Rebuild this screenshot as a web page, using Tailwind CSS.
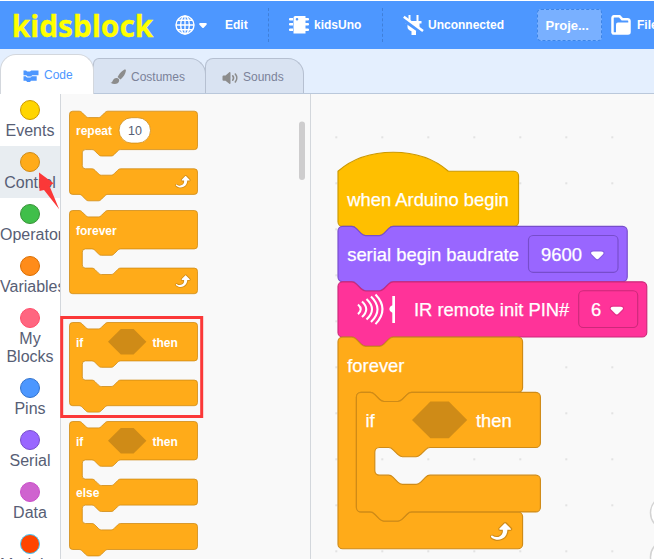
<!DOCTYPE html>
<html lang="en">
<head>
<meta charset="utf-8">
<title>kidsblock</title>
<script src="https://cdn.jsdelivr.net/npm/@tailwindcss/browser@4"></script>
</head>
<body class="w-[654px] h-[559px] overflow-hidden bg-white font-['Liberation_Sans',Arial,sans-serif]">
<div class="relative w-[654px] h-[559px] overflow-hidden flex flex-col pt-px">

  <!-- menu bar -->
  <header class="h-12 shrink-0 bg-[#4d97ff] flex items-center text-white text-xs font-bold overflow-hidden whitespace-nowrap">
    <svg class="w-[168px] h-12 shrink-0" viewBox="0 0 168 48"><text x="11.800" y="36" font-family="Noto Sans, sans-serif" font-weight="700" font-size="29.500" fill="#ffff00" stroke="#ffff00" stroke-width=".3" textLength="141.500" lengthAdjust="spacingAndGlyphs">kidsblock</text></svg>
    <svg class="w-[57px] h-12 shrink-0" viewBox="168 0 57 48" fill="none" stroke="#fff" stroke-width="1.4"><circle cx="185" cy="24" r="9"/><ellipse cx="185" cy="24" rx="4.3" ry="9"/><path d="M185 15v18M176 24h18M177.6 19.2h14.8M177.6 28.8h14.8"/><path d="M200.2 23h5.6L203 26z" fill="#fff" stroke-width="2" stroke-linejoin="round"/></svg>
    <span class="w-[43px] shrink-0 -mt-px">Edit</span>
    <div class="h-[34px] w-px shrink-0 border-l border-dashed border-[#3f7fd9]"></div>
    <svg class="w-[20px] h-[20px] ml-[20px] shrink-0" viewBox="0 0 20 20" fill="#fff"><path fill-rule="evenodd" d="M6.200 1h10.300v17.500H4.500V2.700a1.700 1.700 0 0 1 1.700-1.700zM8 3a1.300 1.300 0 1 0 0 2.600A1.300 1.300 0 0 0 8 3z"/><path d="M1 3h3v2.500H1a1 1 0 0 1 0-2.500zM1 8h3v2.500H1A1 1 0 0 1 1 8zM1 13.500h3V16H1a1 1 0 0 1 0-2.500zM16 3h3a1 1 0 0 1 0 2.500h-3zM16 8h3a1 1 0 0 1 0 2.500h-3zM16 13.500h3a1 1 0 0 1 0 2.500h-3z"/></svg>
    <span class="w-[68px] shrink-0 ml-[5px] -mt-px">kidsUno</span>
    <div class="h-[34px] w-px shrink-0 border-l border-dashed border-[#3f7fd9]"></div>
    <svg class="w-[21px] h-[22px] ml-[20px] shrink-0" viewBox="0 0 21 22" fill="#fff"><path d="M5.500 1h2v6h6V1h2v6h3v2.500h-2V13c0 2.500-2 4-3.500 4.300V21H8.500v-3.700C6 16.500 4.500 15 4.500 13V9.500h-2V7h3z"/><path d="M-1 4.200 20.500 19.200" stroke="#4d97ff" stroke-width="4.500"/><path d="M.8 2.800 20 17" stroke="#fff" stroke-width="2.500"/></svg>
    <span class="w-[109px] shrink-0 ml-[4px] -mt-px">Unconnected</span>
    <div class="w-[65px] h-8 shrink-0 rounded border border-dashed border-[#3d85e8] bg-[#79b0ff] flex items-center pl-[7.500px] pt-px text-[13px]">Proje...</div>
    <svg class="w-[20px] h-[20px] ml-[9px] shrink-0" viewBox="0 0 20 20"><path d="M1.500 17.500V3a1.800 1.800 0 0 1 1.800-1.800h5.200l2.700 3h5.500A1.800 1.800 0 0 1 18.500 6v11a1.500 1.500 0 0 1-1.500 1.500H3a1.500 1.500 0 0 1-1.500-1z" fill="#4d97ff" stroke="#fff" stroke-width="2.500"/><path d="M5 18V9.500A2 2 0 0 1 7 7.500h12V18a1 1 0 0 1-1 1H5z" fill="#fff"/></svg>
    <span class="ml-[6px] shrink-0 -mt-px">File</span>
  </header>

  <!-- tabs -->
  <nav class="h-[45px] shrink-0 bg-[#e4effe] border-b border-[#bac8db] flex items-end text-xs text-[#7b8299]">
    <div class="relative z-10 -mb-px w-[94px] h-[40px] rounded-t-[16px] bg-white border border-b-0 border-[#d3d7dd] flex items-center text-[#4d97ff]">
      <svg class="w-4 h-3 ml-[22px] mt-[3px]" viewBox="0 0 16 12" fill="#4d97ff"><path d="M.5 .5h2.500l1.200 1H7l1.200-1h7.300v4.800H9.200L8 6.500H4.500L3.300 5.300H.5z"/><path d="M.5 6.300h2.200l1.300 1.200h3.500l1.200-1.200h5v4.500H8L7 12H4.200L3 10.800H.5z"/></svg>
      <span class="ml-[5px] mt-[1px]">Code</span>
    </div>
    <div class="-ml-px w-[113px] h-[35px] rounded-t-[16px] rounded-tl-[6px] bg-[#d9e3f2] border border-b-0 border-[#b6c0d1] flex items-center">
      <svg class="w-4 h-4 ml-[16px] mt-[2px]" viewBox="0 0 16 16" fill="#8c8c8c"><path d="M15.500.600c.8.600.3 2.200-.4 3.800-1 2.200-2.700 4.600-4.700 6.100L7.600 8c1-2.200 2.800-4.500 4.700-6.100C13.600.800 14.900.100 15.500.600z"/><path d="M6.800 8.900c1.700.2 2.700 1.400 2.300 3-.5 2.700-4.300 4.200-8.600 1.800 1.300 0 1.700-.8 2.200-2 .7-1.800 2.200-3 4.100-2.800z"/></svg>
      <span class="ml-[5px] mt-px">Costumes</span>
    </div>
    <div class="-ml-px w-[99px] h-[35px] rounded-t-[16px] rounded-tl-[8px] bg-[#d9e3f2] border border-b-0 border-[#b6c0d1] flex items-center">
      <svg class="w-4 h-4 ml-[16px] mt-[3px]" viewBox="0 0 16 16" fill="#8c8c8c"><path d="M.5 6.500A1 1 0 0 1 1.500 5.500h2L7.300 2.200c.6-.4 1.200 0 1.200.6v10.400c0 .7-.6 1-1.200.6L3.500 10.800h-2a1 1 0 0 1-1-1z"/><path d="M10.700 5.800c1 1.300 1 3.100 0 4.400M13.300 4c1.900 2.300 1.900 5.700 0 8" fill="none" stroke="#8c8c8c" stroke-width="1.600" stroke-linecap="round"/></svg>
      <span class="ml-[5px] mt-px">Sounds</span>
    </div>
  </nav>

  <main class="flex flex-1 min-h-0">
    <!-- block categories -->
    <aside class="w-[61px] shrink-0 border-r border-[#d3d7dc] bg-white overflow-hidden flex flex-col text-base leading-[18px] text-[#575e75] text-center">
      <div class="h-[52px] shrink-0 flex flex-col items-center pt-1.5"><i class="size-5 rounded-full bg-[#ffd500] border border-[#cc9900]"></i><span class="mt-[2px]">Events</span></div>
      <div class="h-[52px] shrink-0 flex flex-col items-center pt-1.5 bg-[#e8edf1]"><i class="size-5 rounded-full bg-[#ffab19] border border-[#cf8b17]"></i><span class="mt-[2px]">Control</span></div>
      <div class="h-[52px] shrink-0 flex flex-col items-center pt-1.5"><i class="size-5 rounded-full bg-[#40bf4a] border border-[#389438]"></i><span class="mt-[2px] self-start">Operators</span></div>
      <div class="h-[52px] shrink-0 flex flex-col items-center pt-1.5"><i class="size-5 rounded-full bg-[#ff8c1a] border border-[#db6e00]"></i><span class="mt-[2px] self-start">Variables</span></div>
      <div class="h-[70px] shrink-0 flex flex-col items-center pt-1.5"><i class="size-5 rounded-full bg-[#ff6680] border border-[#ff4d6a]"></i><span class="mt-[2px]">My<br>Blocks</span></div>
      <div class="h-[52px] shrink-0 flex flex-col items-center pt-1.5"><i class="size-5 rounded-full bg-[#4c97ff] border border-[#3373cc]"></i><span class="mt-[2px]">Pins</span></div>
      <div class="h-[52px] shrink-0 flex flex-col items-center pt-1.5"><i class="size-5 rounded-full bg-[#9966ff] border border-[#774dcb]"></i><span class="mt-[2px]">Serial</span></div>
      <div class="h-[52px] shrink-0 flex flex-col items-center pt-1.5"><i class="size-5 rounded-full bg-[#cf63cf] border border-[#c94fc9]"></i><span class="mt-[2px]">Data</span></div>
      <div class="h-[52px] shrink-0 flex flex-col items-center pt-1.5"><i class="size-5 rounded-full bg-[#ff4500] border border-[#42ccff]"></i><span class="mt-[2px] self-start">Modules</span></div>
    </aside>

    <!-- block palette -->
    <section class="w-[250px] shrink-0 bg-[#f9f9f9] border-r border-[#d3d7dc]">
      <svg class="block w-[249px] h-[465px]" viewBox="61 94 249 465">
        <defs>
          <path id="cblock" d="M0 4a4 4 0 0 1 4-4H12c2 0 3 1 4 2l4 4c1 1 2 2 4 2h12c2 0 3-1 4-2l4-4c1-1 2-2 4-2H156a4 4 0 0 1 4 4v40a4 4 0 0 1-4 4H64c-2 0-3 1-4 2l-4 4c-1 1-2 2-4 2h-12c-2 0-3-1-4-2l-4-4c-1-1-2-2-4-2h-8a4 4 0 0 0-4 4v16a4 4 0 0 0 4 4h8c2 0 3 1 4 2l4 4c1 1 2 2 4 2h12c2 0 3-1 4-2l4-4c1-1 2-2 4-2H156a4 4 0 0 1 4 4v24a4 4 0 0 1-4 4H48c-2 0-3 1-4 2l-4 4c-1 1-2 2-4 2h-12c-2 0-3-1-4-2l-4-4c-1-1-2-2-4-2H4a4 4 0 0 1-4-4z" fill="#ffab19" stroke="#cf8b17"/>
          <g id="loop"><path fill="#cf8b17" d="M23.300,11c-0.300,0.600-0.900,1-1.500,1h-1.600c-0.100,1.300-0.500,2.500-1.100,3.600c-0.900,1.700-2.300,3.200-4.100,4.100c-1.700,0.900-3.600,1.200-5.500,0.900c-1.800-0.300-3.500-1.100-4.900-2.300c-0.700-0.700-0.700-1.900,0-2.600c0.600-0.600,1.600-0.700,2.300-0.200H7c0.900,0.600,1.900,0.900,2.900,0.900s1.900-0.300,2.700-0.900c1.100-0.800,1.800-2.100,1.800-3.500h-1.500c-0.900,0-1.700-0.700-1.700-1.700c0-0.400,0.200-0.900,0.500-1.200l4.400-4.400c0.700-0.600,1.700-0.600,2.400,0L23,9.200C23.500,9.700,23.600,10.400,23.300,11z"/><path fill="#fff" d="M21.800,11h-2.600c0,1.500-0.300,2.900-1,4.200c-0.800,1.600-2.100,2.800-3.700,3.600c-1.500,0.800-3.300,1.100-4.900,0.800c-1.600-0.200-3.200-1-4.400-2.100c-0.400-0.300-0.400-0.900-0.100-1.200c0.300-0.400,0.900-0.400,1.200-0.100c1,0.700,2.200,1.100,3.400,1.100s2.300-0.300,3.300-1c0.900-0.600,1.600-1.500,2-2.600c0.300-0.900,0.400-1.800,0.200-2.800h-2.400c-0.400,0-0.700-0.300-0.700-0.700c0-0.200,0.100-0.300,0.200-0.400l4.400-4.400c0.300-0.300,0.700-0.300,0.900,0L22,9.800c0.300,0.300,0.400,0.600,0.300,0.900S22,11,21.800,11z"/></g>
          <path id="hex" d="M0 16 16 0h16l16 16-16 16H16z" fill="#cf8b17"/>
        </defs>
        <use href="#cblock" transform="translate(69.500 111.200) scale(.8)"/>
        <rect x="119" y="117.700" width="31.500" height="25.400" rx="12.700" fill="#fff" stroke="#cf8b17" stroke-width=".8"/>
        <use href="#loop" transform="translate(171.900 171.800) scale(.8)"/>
        <path transform="translate(69.500 210.500) scale(.8)" d="M0 4a4 4 0 0 1 4-4H12c2 0 3 1 4 2l4 4c1 1 2 2 4 2h12c2 0 3-1 4-2l4-4c1-1 2-2 4-2H156a4 4 0 0 1 4 4v40a4 4 0 0 1-4 4H64c-2 0-3 1-4 2l-4 4c-1 1-2 2-4 2h-12c-2 0-3-1-4-2l-4-4c-1-1-2-2-4-2h-8a4 4 0 0 0-4 4v16a4 4 0 0 0 4 4h8c2 0 3 1 4 2l4 4c1 1 2 2 4 2h12c2 0 3-1 4-2l4-4c1-1 2-2 4-2H156a4 4 0 0 1 4 4v24a4 4 0 0 1-4 4H4a4 4 0 0 1-4-4z" fill="#ffab19" stroke="#cf8b17"/>
        <use href="#loop" transform="translate(171.900 271.200) scale(.8)"/>
        <use href="#cblock" transform="translate(69.500 322.500) scale(.8)"/>
        <use href="#hex" transform="translate(108 329) scale(.8)"/>
        <path transform="translate(69.500 421.500) scale(.8)" d="M0 4a4 4 0 0 1 4-4H12c2 0 3 1 4 2l4 4c1 1 2 2 4 2h12c2 0 3-1 4-2l4-4c1-1 2-2 4-2H156a4 4 0 0 1 4 4v40a4 4 0 0 1-4 4H64c-2 0-3 1-4 2l-4 4c-1 1-2 2-4 2h-12c-2 0-3-1-4-2l-4-4c-1-1-2-2-4-2h-8a4 4 0 0 0-4 4v16a4 4 0 0 0 4 4h8c2 0 3 1 4 2l4 4c1 1 2 2 4 2h12c2 0 3-1 4-2l4-4c1-1 2-2 4-2H156a4 4 0 0 1 4 4v24.500a4 4 0 0 1-4 4H64c-2 0-3 1-4 2l-4 4c-1 1-2 2-4 2h-12c-2 0-3-1-4-2l-4-4c-1-1-2-2-4-2h-8a4 4 0 0 0-4 4v15a4 4 0 0 0 4 4h8c2 0 3 1 4 2l4 4c1 1 2 2 4 2h12c2 0 3-1 4-2l4-4c1-1 2-2 4-2H156a4 4 0 0 1 4 4v24.500a4 4 0 0 1-4 4H48c-2 0-3 1-4 2l-4 4c-1 1-2 2-4 2h-12c-2 0-3-1-4-2l-4-4c-1-1-2-2-4-2H4a4 4 0 0 1-4-4z" fill="#ffab19" stroke="#cf8b17"/>
        <use href="#hex" transform="translate(108 428) scale(.8)"/>
        <g font-family="Liberation Sans, Arial, sans-serif" font-size="12" font-weight="700" fill="#fff">
          <text x="76" y="135">repeat</text>
          <text x="128" y="135" font-weight="400" fill="#575e75" font-size="12.500">10</text>
          <text x="76" y="234.500">forever</text>
          <text x="76" y="346.500">if</text><text x="152.500" y="346.500">then</text>
          <text x="76" y="445.500">if</text><text x="152.500" y="445.500">then</text>
          <text x="76" y="496.500">else</text>
        </g>
        <rect x="299" y="121.500" width="6" height="58.500" rx="3" fill="#cecdce"/>
      </svg>
    </section>

    <!-- script workspace -->
    <section class="flex-1 min-w-0 bg-[#f9f9f9]">
      <svg class="block w-[343px] h-[465px]" viewBox="311 94 343 465">
        <defs>
          <pattern id="grid" x="313.300" y="114.300" width="46" height="46" patternUnits="userSpaceOnUse"><path d="M22 23h2M23 22v2" stroke="#ddd" stroke-width="1.200"/></pattern>
          <g id="caret"><path opacity=".1" d="M12.710,2.440A2.410,2.410,0,0,1,12,4.160L8.080,8.080a2.450,2.450,0,0,1-3.450,0L0.720,4.160A2.420,2.420,0,0,1,0,2.440,2.480,2.480,0,0,1,.710.710C1,0.470,1.430,0,6.360,0S11.750,0.460,12,.710A2.440,2.440,0,0,1,12.710,2.440Z"/><path fill="#fff" d="M6.360,7.790a1.430,1.430,0,0,1-1-.420L1.420,3.450a1.440,1.440,0,0,1,0-2c0.560-.560,9.310-0.560,9.870,0a1.440,1.440,0,0,1,0,2L7.370,7.370A1.430,1.430,0,0,1,6.360,7.790Z"/></g>
        </defs>
        <rect x="311" y="94" width="343" height="465" fill="url(#grid)"/>
        <g transform="translate(338 171.200) scale(1.150)">
          <path d="M0 0c25-22 71-22 96 0H153a4 4 0 0 1 4 4v40a4 4 0 0 1-4 4H48c-2 0-3 1-4 2l-4 4c-1 1-2 2-4 2h-12c-2 0-3-1-4-2l-4-4c-1-1-2-2-4-2H4a4 4 0 0 1-4-4z" fill="#ffbf00" stroke="#cc9900"/>
          <path transform="translate(0 48)" d="M0 4a4 4 0 0 1 4-4H12c2 0 3 1 4 2l4 4c1 1 2 2 4 2h12c2 0 3-1 4-2l4-4c1-1 2-2 4-2H247.500a4 4 0 0 1 4 4v40a4 4 0 0 1-4 4H48c-2 0-3 1-4 2l-4 4c-1 1-2 2-4 2h-12c-2 0-3-1-4-2l-4-4c-1-1-2-2-4-2H4a4 4 0 0 1-4-4z" fill="#9966ff" stroke="#774dcb"/>
          <path transform="translate(0 96.200)" d="M0 4a4 4 0 0 1 4-4H12c2 0 3 1 4 2l4 4c1 1 2 2 4 2h12c2 0 3-1 4-2l4-4c1-1 2-2 4-2H264.500a4 4 0 0 1 4 4v40a4 4 0 0 1-4 4H48c-2 0-3 1-4 2l-4 4c-1 1-2 2-4 2h-12c-2 0-3-1-4-2l-4-4c-1-1-2-2-4-2H4a4 4 0 0 1-4-4z" fill="#ff3399" stroke="#cc297a"/>
          <path transform="translate(0 144.300)" d="M0 4a4 4 0 0 1 4-4H12c2 0 3 1 4 2l4 4c1 1 2 2 4 2h12c2 0 3-1 4-2l4-4c1-1 2-2 4-2H156.500a4 4 0 0 1 4 4v40a4 4 0 0 1-4 4H64c-2 0-3 1-4 2l-4 4c-1 1-2 2-4 2h-12c-2 0-3-1-4-2l-4-4c-1-1-2-2-4-2h-8a4 4 0 0 0-4 4v96a4 4 0 0 0 4 4h8c2 0 3 1 4 2l4 4c1 1 2 2 4 2h12c2 0 3-1 4-2l4-4c1-1 2-2 4-2H156.500a4 4 0 0 1 4 4v24a4 4 0 0 1-4 4H4a4 4 0 0 1-4-4z" fill="#ffab19" stroke="#cf8b17"/>
          <use href="#cblock" transform="translate(16 192.300)"/>
        </g>
        <use href="#hex" transform="translate(412 401.500) scale(1.150)"/>
        <use href="#loop" transform="translate(485.300 517.200) scale(1.150)"/>
        <rect x="528.500" y="235.500" width="89.500" height="36.800" rx="4.600" fill="none" stroke="#774dcb" stroke-width="1.150"/>
        <rect x="578.700" y="290.700" width="59" height="36.800" rx="4.600" fill="none" stroke="#cc297a" stroke-width="1.150"/>
        <use href="#caret" transform="translate(590 250.300) scale(1.150)"/>
        <use href="#caret" transform="translate(609.500 305.600) scale(1.150)"/>
        <g fill="none" stroke="#fff" stroke-width="2.100"><path d="M358 304.500q5.500 4.800 0 9.600M362 301.500q8.500 7.800 0 15.600M366.500 299q11 10.300 0 20.600M371 296.500q13 12.800 0 25.600M375.500 294.500q14 14.800 0 29.600"/></g>
        <path d="M392.300 296h2.700v27h-2.700v-10.300q-3-1.200-3-3.700t3-3.700z" fill="#fff"/>
        <g font-family="Liberation Sans, Arial, sans-serif" font-size="18.400" fill="#fff" stroke="#fff" stroke-width=".25">
          <text x="347.200" y="206">when Arduino begin</text>
          <text x="347.200" y="261">serial begin baudrate</text>
          <text x="541" y="261">9600</text>
          <text x="414" y="316">IR remote init PIN#</text>
          <text x="591" y="316">6</text>
          <text x="347.200" y="372">forever</text>
          <text x="365.500" y="427">if</text><text x="476" y="427">then</text>
        </g>
        <g fill="#fff" stroke="#d3d3d3" stroke-width="1.500"><circle cx="667.500" cy="512.700" r="17"/><circle cx="667.500" cy="557" r="17"/></g>
      </svg>
    </section>
  </main>

  <!-- highlight frame and pointer arrow -->
  <svg class="absolute left-0 top-0 w-[654px] h-[559px]" viewBox="0 0 654 559">
    <rect x="61.700" y="317.500" width="140" height="99" fill="none" stroke="#fb3838" stroke-width="3"/>
    <path d="M39 172.500 53.500 183.300 49.500 186 59.200 209.200 44 190 39.500 191z" fill="#fb3838"/>
  </svg>
</div>
</body>
</html>
